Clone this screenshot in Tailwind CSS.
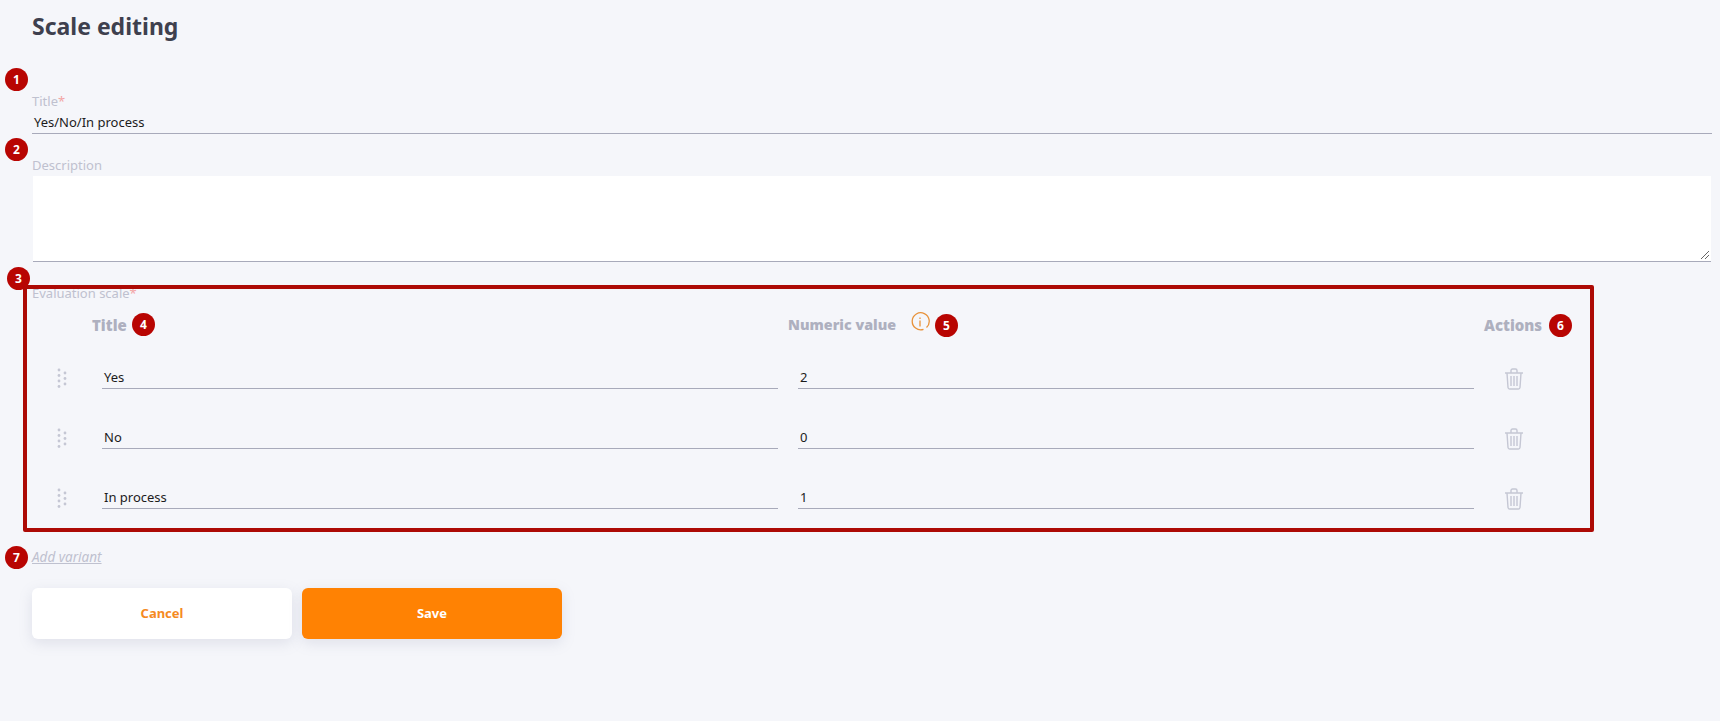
<!DOCTYPE html>
<html>
<head>
<meta charset="utf-8">
<script src="https://cdn.jsdelivr.net/npm/@tailwindcss/browser@4"></script>
</head>
<body class="bg-[#f5f6fa] font-['Noto_Sans',sans-serif]">
<div class="relative h-[721px] w-[1720px] overflow-hidden pl-8 pr-2 pt-[10px]">
  <h1 class="h-8 text-[23px] leading-8 font-bold text-[#3e404e]">Scale editing</h1>

  <div class="mt-[49px] h-5 text-[13px] leading-5 text-[#bfc1cf]">Title<span class="text-[#f3a5a5]">*</span></div>
  <div class="h-[23px] border-b border-[#a8aaba] pl-[2px] text-[13px] leading-[23px] text-[#1c1c1c]">Yes/No/In process</div>

  <div class="mt-[21px] h-[21px] text-[13px] leading-5 text-[#bfc1cf]">Description</div>
  <div class="relative mx-px h-[86px] border-b border-[#a8aaba] bg-white">
    <svg class="absolute right-[1px] bottom-[1px]" width="10" height="10" viewBox="0 0 10 10" fill="none" stroke="#666" stroke-width="1"><path d="M1 9 9 1M5 9 9 5"/></svg>
  </div>

  <div class="mt-[21px] h-5 text-[13px] leading-5 text-[#bfc1cf]">Evaluation scale<span class="text-[#f3a5a5]">*</span></div>

  <div class="mt-[10px] grid h-6 grid-cols-[696px_696px_1fr] pl-[60px] text-[15px] leading-6 font-black text-[#aeb0bf]">
    <div>Title</div>
    <div class="text-[14.3px]">Numeric value</div>
    <div>Actions</div>
  </div>

  <div class="mt-[29px] flex flex-col gap-[37px]">
    <div class="flex h-[23px] items-end">
      <svg class="mb-[1px] ml-[25px] h-[20px] w-[10px]" viewBox="0 0 10 20" fill="#c5c7d4"><circle cx="2" cy="2" r="1.4"/><circle cx="2" cy="7.5" r="1.4"/><circle cx="2" cy="13" r="1.4"/><circle cx="2" cy="18.5" r="1.4"/><circle cx="8" cy="5" r="1.4"/><circle cx="8" cy="10.5" r="1.4"/><circle cx="8" cy="16" r="1.4"/></svg>
      <div class="ml-[35px] h-[23px] w-[676px] border-b border-[#a8aaba] pl-[2px] text-[13px] leading-[23px] text-[#1c1c1c]">Yes</div>
      <div class="ml-5 h-[23px] w-[676px] border-b border-[#a8aaba] pl-[2px] text-[13px] leading-[23px] text-[#1c1c1c]">2</div>
      <svg class="mb-[-1px] ml-[30px] h-[22px] w-[20px]" viewBox="0 0 20 22" fill="none" stroke="#c5c7d4" stroke-width="1.4"><path d="M1 5h18M7 5V2.500C7 1.700 7.700 1 8.500 1h3c.8 0 1.500.7 1.500 1.500V5M3 5l1 14.500C4.100 20.400 4.800 21 5.600 21h8.800c.8 0 1.500-.6 1.600-1.500L17 5M7 8v10M10 8v10M13 8v10"/></svg>
    </div>
    <div class="flex h-[23px] items-end">
      <svg class="mb-[1px] ml-[25px] h-[20px] w-[10px]" viewBox="0 0 10 20" fill="#c5c7d4"><circle cx="2" cy="2" r="1.4"/><circle cx="2" cy="7.5" r="1.4"/><circle cx="2" cy="13" r="1.4"/><circle cx="2" cy="18.5" r="1.4"/><circle cx="8" cy="5" r="1.4"/><circle cx="8" cy="10.5" r="1.4"/><circle cx="8" cy="16" r="1.4"/></svg>
      <div class="ml-[35px] h-[23px] w-[676px] border-b border-[#a8aaba] pl-[2px] text-[13px] leading-[23px] text-[#1c1c1c]">No</div>
      <div class="ml-5 h-[23px] w-[676px] border-b border-[#a8aaba] pl-[2px] text-[13px] leading-[23px] text-[#1c1c1c]">0</div>
      <svg class="mb-[-1px] ml-[30px] h-[22px] w-[20px]" viewBox="0 0 20 22" fill="none" stroke="#c5c7d4" stroke-width="1.4"><path d="M1 5h18M7 5V2.500C7 1.700 7.700 1 8.500 1h3c.8 0 1.500.7 1.500 1.500V5M3 5l1 14.500C4.100 20.400 4.800 21 5.600 21h8.800c.8 0 1.500-.6 1.600-1.500L17 5M7 8v10M10 8v10M13 8v10"/></svg>
    </div>
    <div class="flex h-[23px] items-end">
      <svg class="mb-[1px] ml-[25px] h-[20px] w-[10px]" viewBox="0 0 10 20" fill="#c5c7d4"><circle cx="2" cy="2" r="1.4"/><circle cx="2" cy="7.5" r="1.4"/><circle cx="2" cy="13" r="1.4"/><circle cx="2" cy="18.5" r="1.4"/><circle cx="8" cy="5" r="1.4"/><circle cx="8" cy="10.5" r="1.4"/><circle cx="8" cy="16" r="1.4"/></svg>
      <div class="ml-[35px] h-[23px] w-[676px] border-b border-[#a8aaba] pl-[2px] text-[13px] leading-[23px] text-[#1c1c1c]">In process</div>
      <div class="ml-5 h-[23px] w-[676px] border-b border-[#a8aaba] pl-[2px] text-[13px] leading-[23px] text-[#1c1c1c]">1</div>
      <svg class="mb-[-1px] ml-[30px] h-[22px] w-[20px]" viewBox="0 0 20 22" fill="none" stroke="#c5c7d4" stroke-width="1.4"><path d="M1 5h18M7 5V2.500C7 1.700 7.700 1 8.500 1h3c.8 0 1.500.7 1.500 1.500V5M3 5l1 14.500C4.100 20.400 4.800 21 5.600 21h8.800c.8 0 1.500-.6 1.600-1.500L17 5M7 8v10M10 8v10M13 8v10"/></svg>
    </div>
  </div>

  <div class="mt-[38px] h-5 text-[13.5px] leading-5 text-[#bfc1cf] italic underline">Add variant</div>

  <div class="mt-[21px] flex gap-[10px]">
    <button class="h-[51px] w-[260px] rounded-md bg-white text-[13px] font-bold text-[#f58a1f] shadow-[0_4px_14px_rgba(120,125,160,0.18)]">Cancel</button>
    <button class="h-[51px] w-[260px] rounded-md bg-[#ff8203] text-[13px] font-bold text-white shadow-[0_4px_14px_rgba(120,125,160,0.18)]">Save</button>
  </div>

  <!-- annotation overlays -->
  <div class="absolute top-[285px] left-[23px] h-[247px] w-[1571px] rounded-[2px] border-4 border-[#ad0a05]"></div>
  <svg class="absolute top-[312px] left-[910px]" width="20" height="20" viewBox="0 0 20 20" fill="none" stroke="#e8923a" stroke-width="1.3"><path d="M13.500 17.300A8.500 8.500 0 1 1 16.500 15.500M10 8.500v6M10 5.500v1.500"/></svg>
  <span class="absolute top-[68px] left-[5px] flex size-[23px] items-center justify-center rounded-full bg-[#b80502] text-xs font-bold text-white">1</span>
  <span class="absolute top-[138px] left-[5px] flex size-[23px] items-center justify-center rounded-full bg-[#b80502] text-xs font-bold text-white">2</span>
  <span class="absolute top-[267px] left-[7px] flex size-[23px] items-center justify-center rounded-full bg-[#b80502] text-xs font-bold text-white">3</span>
  <span class="absolute top-[313px] left-[132px] flex size-[23px] items-center justify-center rounded-full bg-[#b80502] text-xs font-bold text-white">4</span>
  <span class="absolute top-[314px] left-[935px] flex size-[23px] items-center justify-center rounded-full bg-[#b80502] text-xs font-bold text-white">5</span>
  <span class="absolute top-[314px] left-[1549px] flex size-[23px] items-center justify-center rounded-full bg-[#b80502] text-xs font-bold text-white">6</span>
  <span class="absolute top-[546px] left-[5px] flex size-[23px] items-center justify-center rounded-full bg-[#b80502] text-xs font-bold text-white">7</span>
</div>
</body>
</html>
